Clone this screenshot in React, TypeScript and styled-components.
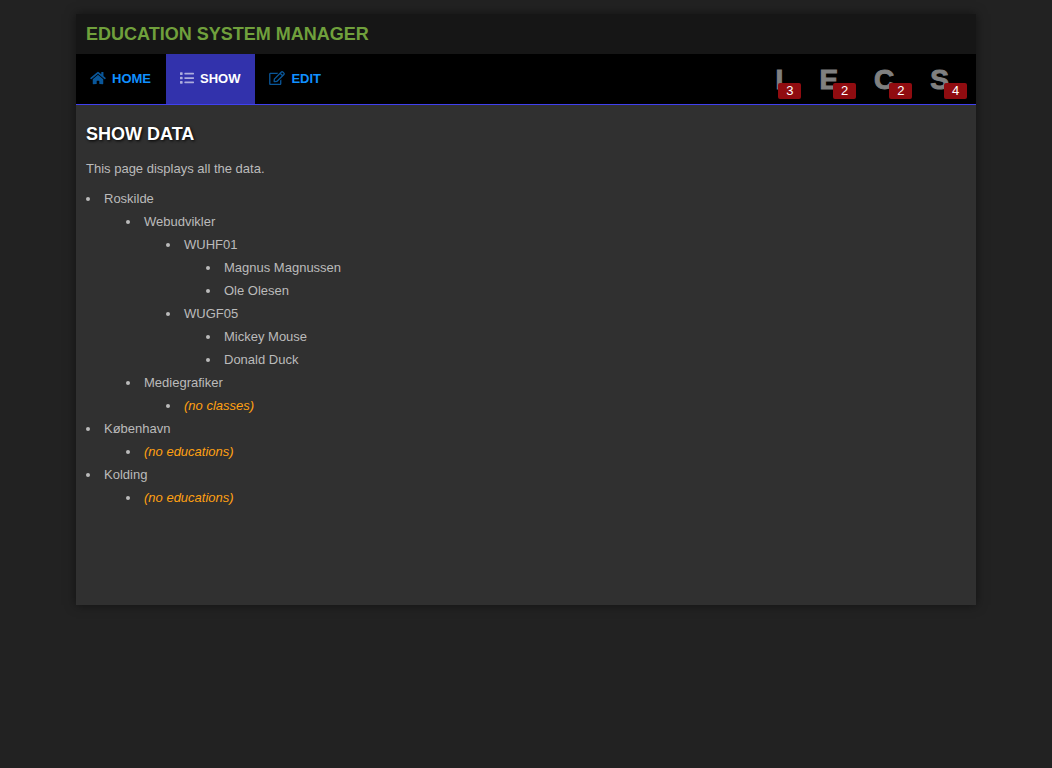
import React from "react";
import styled, { createGlobalStyle } from "styled-components";
import { FaHome, FaList, FaRegEdit } from "react-icons/fa";

const GlobalStyle = createGlobalStyle`
  * { box-sizing: border-box; }
  html { background: #222; }
  body {
    margin: 0;
    background: #222;
    color: #bbb;
    font: 13px/23px "Liberation Sans", Arial, sans-serif;
  }
`;

const Page = styled.div`
  max-width: 900px;
  margin: 14px auto;
  background: #303030;
  box-shadow: 0 0 10px rgba(0, 0, 0, 0.5);
`;

const Header = styled.header`
  padding: 0 10px;
  background: #161616;
`;

const SiteTitle = styled.h1`
  margin: 0;
  color: #70a03c;
  font-size: 18px;
  font-weight: 900;
  line-height: 40px;
  text-transform: uppercase;
`;

const Bar = styled.div`
  display: flex;
  justify-content: space-between;
  background: #000;
  border-bottom: 1px solid #4040f0;
`;

const Nav = styled.nav`
  display: flex;
`;

const NavLink = styled.a<{ $active?: boolean; $iconWidth: number }>`
  display: flex;
  align-items: center;
  gap: 6px;
  height: 50px;
  padding: 0 15px 2px 14px;
  background: ${(p) => (p.$active ? "#3232ac" : "transparent")};
  color: ${(p) => (p.$active ? "#fff" : "#1090ff")};
  font-size: 13px;
  font-weight: bold;
  text-decoration: none;
  text-transform: uppercase;

  svg {
    width: ${(p) => p.$iconWidth}px;
    height: 14px;
    opacity: 0.6;
  }
`;

const Counters = styled.div`
  display: flex;
  gap: 18px;
  padding-right: 9px;
`;

const Counter = styled.div`
  position: relative;
  height: 50px;
  padding-right: 18px;
  color: #808080;
  font-size: 28px;
  font-weight: 900;
  line-height: 52px;
  -webkit-text-stroke: 1px #808080;
`;

const Badge = styled.span`
  position: absolute;
  right: 0;
  bottom: 5px;
  width: 23px;
  border-radius: 2px;
  background: #900c10;
  color: #fff;
  font-size: 13px;
  font-weight: normal;
  line-height: 16px;
  text-align: center;
  -webkit-text-stroke: 0;
`;

const Content = styled.main`
  min-height: 500px;
  padding: 18px 10px;
`;

const Heading = styled.h2`
  margin: 0 0 11px;
  color: #fff;
  font-size: 18px;
  line-height: 23px;
  text-shadow: 1px 1px 3px #000;
  text-transform: uppercase;
`;

const Intro = styled.p`
  margin: 0 0 7px;
`;

const List = styled.ul`
  margin: 0;
  padding: 0;
  list-style: disc inside;

  & & {
    padding-left: 40px;
  }
`;

const Empty = styled.em`
  color: #ffa012;
`;

type Entry = { name: string; children?: Entry[]; empty?: string };

const schools: Entry[] = [
  {
    name: "Roskilde",
    children: [
      {
        name: "Webudvikler",
        children: [
          { name: "WUHF01", children: [{ name: "Magnus Magnussen" }, { name: "Ole Olesen" }] },
          { name: "WUGF05", children: [{ name: "Mickey Mouse" }, { name: "Donald Duck" }] },
        ],
      },
      { name: "Mediegrafiker", empty: "(no classes)" },
    ],
  },
  { name: "København", empty: "(no educations)" },
  { name: "Kolding", empty: "(no educations)" },
];

const counters = [
  { letter: "I", count: 3 },
  { letter: "E", count: 2 },
  { letter: "C", count: 2 },
  { letter: "S", count: 4 },
];

function Tree({ entries }: { entries: Entry[] }) {
  return (
    <List>
      {entries.map((entry) => (
        <li key={entry.name}>
          {entry.name}
          {entry.children && <Tree entries={entry.children} />}
          {entry.empty && (
            <List>
              <li><Empty>{entry.empty}</Empty></li>
            </List>
          )}
        </li>
      ))}
    </List>
  );
}

export default function App() {
  return (
    <>
      <GlobalStyle />
      <Page>
        <Header>
          <SiteTitle>Education System Manager</SiteTitle>
        </Header>
        <Bar>
          <Nav>
            <NavLink href="#home" $iconWidth={16}><FaHome />Home</NavLink>
            <NavLink href="#show" $iconWidth={14} $active aria-current="page"><FaList />Show</NavLink>
            <NavLink href="#edit" $iconWidth={16}><FaRegEdit />Edit</NavLink>
          </Nav>
          <Counters>
            {counters.map((c) => (
              <Counter key={c.letter}>
                {c.letter}
                <Badge>{c.count}</Badge>
              </Counter>
            ))}
          </Counters>
        </Bar>
        <Content>
          <Heading>Show data</Heading>
          <Intro>This page displays all the data.</Intro>
          <Tree entries={schools} />
        </Content>
      </Page>
    </>
  );
}
